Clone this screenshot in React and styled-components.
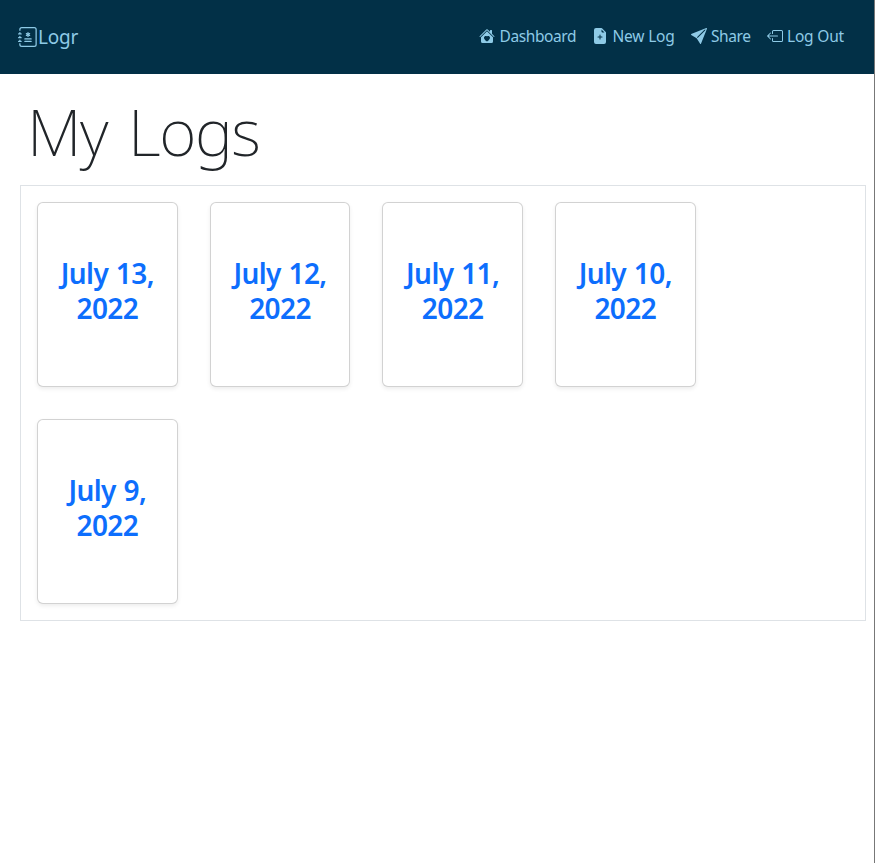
import React from "react";
import styled, { createGlobalStyle } from "styled-components";
import { BsJournalMedical, BsHouseHeartFill, BsFileEarmarkPlusFill, BsSendFill, BsBoxArrowLeft } from "react-icons/bs";

const GlobalStyle = createGlobalStyle`
  * { box-sizing: border-box; }
  body { margin: 0; background: #fff; color: #212529; font-family: "Noto Sans", "Open Sans", sans-serif; }
`;

const Page = styled.div`
  min-height: 863px;
  border-right: 1px solid #777;
`;

const Navbar = styled.nav`
  display: flex;
  align-items: center;
  justify-content: space-between;
  height: 74px;
  padding: 0 30px 0 18px;
  background: #023047;
  color: #8ecae6;
`;

const Brand = styled.a`
  display: flex;
  align-items: center;
  font-size: 19px;
  line-height: 30px;
  letter-spacing: -0.2px;
  svg { width: 20px; height: 20px; }
`;

const NavLinks = styled.div`
  display: flex;
  gap: 16px;
  padding-bottom: 2px;
`;

const NavLink = styled.a`
  display: flex;
  align-items: center;
  gap: ${(p) => p.$gap}px;
  width: ${(p) => p.$width}px;
  font-size: 15.5px;
  line-height: 24px;
  letter-spacing: ${(p) => p.$spacing}px;
  white-space: nowrap;
  svg { width: 16px; height: 16px; flex: none; }
`;

const Title = styled.h1`
  margin: 20px 0 0 27px;
  height: 91px;
  font-size: 64px;
  line-height: 76px;
  font-weight: 250;
  letter-spacing: -1.5px;
  word-spacing: 6px;
`;

const LogGrid = styled.main`
  display: grid;
  grid-template-columns: repeat(4, 140.66px);
  grid-auto-rows: 185px;
  gap: 32px;
  margin: 0 8px 0 20px;
  padding: 16px;
  border: 1px solid #dee2e6;
`;

const LogCard = styled.article`
  padding: 53px 10px 0;
  border: 1px solid rgba(0, 0, 0, 0.176);
  border-radius: 6px;
  background: #fff;
  box-shadow: 0 2px 4px rgba(0, 0, 0, 0.075);
`;

const LogDate = styled.h2`
  margin: 0;
  color: #0d6efd;
  font-size: 28px;
  line-height: 35px;
  font-weight: 600;
  text-align: center;
  letter-spacing: -0.6px;
  word-spacing: 1px;
`;

const links = [
  { label: "Dashboard", Icon: BsHouseHeartFill, width: 97, spacing: -0.4, gap: 4.5 },
  { label: "New Log", Icon: BsFileEarmarkPlusFill, width: 83, spacing: -0.2, gap: 4.5 },
  { label: "Share", Icon: BsSendFill, width: 60, spacing: -0.4, gap: 4 },
  { label: "Log Out", Icon: BsBoxArrowLeft, width: 77, spacing: -0.2, gap: 4 },
];

const days = [13, 12, 11, 10, 9];

export default function App() {
  return (
    <Page>
      <GlobalStyle />
      <Navbar>
        <Brand><BsJournalMedical />Logr</Brand>
        <NavLinks>
          {links.map(({ label, Icon, width, spacing, gap }) => (
            <NavLink key={label} $width={width} $spacing={spacing} $gap={gap}><Icon />{label}</NavLink>
          ))}
        </NavLinks>
      </Navbar>
      <Title>My Logs</Title>
      <LogGrid>
        {days.map((day) => (
          <LogCard key={day}><LogDate>July {day},<br />2022</LogDate></LogCard>
        ))}
      </LogGrid>
    </Page>
  );
}
